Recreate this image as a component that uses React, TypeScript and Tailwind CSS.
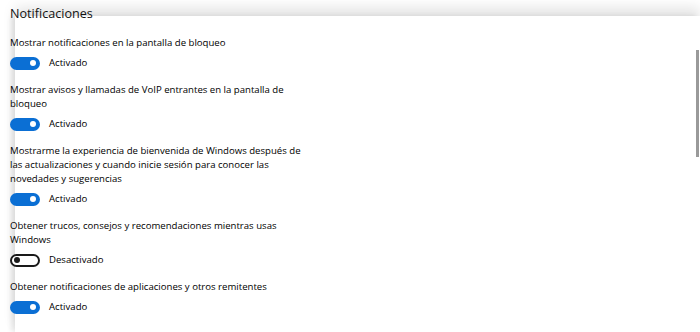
import { useState } from "react";

type Item = { id: number; lines: string[]; on: boolean };

const initial: Item[] = [
  { id: 1, lines: ["Mostrar notificaciones en la pantalla de bloqueo"], on: true },
  { id: 2, lines: ["Mostrar avisos y llamadas de VoIP entrantes en la pantalla de", "bloqueo"], on: true },
  {
    id: 3,
    lines: [
      "Mostrarme la experiencia de bienvenida de Windows después de",
      "las actualizaciones y cuando inicie sesión para conocer las",
      "novedades y sugerencias",
    ],
    on: true,
  },
  { id: 4, lines: ["Obtener trucos, consejos y recomendaciones mientras usas", "Windows"], on: false },
  { id: 5, lines: ["Obtener notificaciones de aplicaciones y otros remitentes"], on: true },
];

function Toggle({ on, onClick }: { on: boolean; onClick: () => void }) {
  return (
    <button
      onClick={onClick}
      className={`flex h-[13px] w-[30px] items-center rounded-full border-2 px-[2px] ${
        on ? "justify-end border-[#0b6fd4] bg-[#0b6fd4]" : "justify-start border-[#1a1a1a] bg-white"
      }`}
    >
      <span className={`block h-[6px] w-[6px] rounded-full ${on ? "bg-white" : "bg-[#1a1a1a]"}`} />
    </button>
  );
}

export default function App() {
  const [items, setItems] = useState(initial);

  const flip = (id: number) =>
    setItems((prev) => prev.map((it) => (it.id === id ? { ...it, on: !it.on } : it)));

  return (
    <div
      className="relative h-[332px] w-[700px] overflow-hidden bg-white text-black"
      style={{ fontFamily: '"Open Sans", "Noto Sans", sans-serif' }}
    >
      <h2 className="relative z-10 h-4 pl-[10px] pt-[6px] text-[12.6px] leading-[16px] text-[#111]">
        Notificaciones
      </h2>
      <div className="ml-[15px] h-[316px] bg-white shadow-[0_-9px_12px_rgba(0,0,0,0.1),-4px_0_5px_rgba(0,0,0,0.09)]">
        <div className="-ml-[5px] flex flex-col pt-[20px] text-[9.6px] leading-[14px]">
          {items.map((it) => (
            <div key={it.id} className="mb-[13px] flex flex-col">
              <p>
                {it.lines.map((l, i) => (
                  <span key={i} className="block">
                    {l}
                  </span>
                ))}
              </p>
              <div className="mt-[6px] flex items-center gap-[9px]">
                <Toggle on={it.on} onClick={() => flip(it.id)} />
                <span>{it.on ? "Activado" : "Desactivado"}</span>
              </div>
            </div>
          ))}
        </div>
      </div>
      <div className="absolute right-[1px] top-[50px] h-[107px] w-[3px] bg-[#9a9a9a]" />
    </div>
  );
}
